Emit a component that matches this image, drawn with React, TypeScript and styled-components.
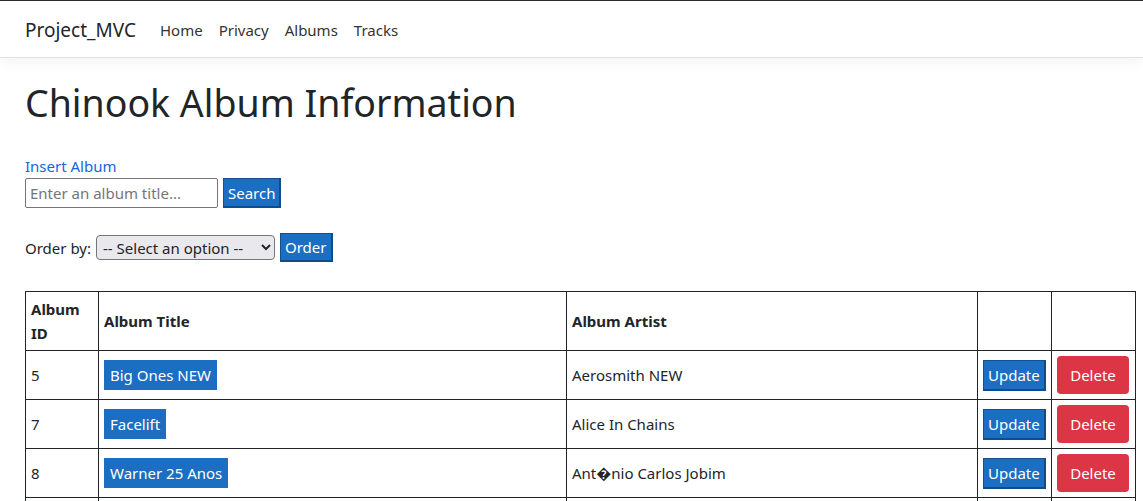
import styled, { createGlobalStyle } from 'styled-components'

const GlobalStyle = createGlobalStyle`
  body {
    margin: 0;
    font-family: 'Noto Sans', 'Open Sans', sans-serif;
    font-size: 15px;
    line-height: 24px;
    color: #212529;
    background: #fff;
    border-top: 1px solid #2b2b2b;
  }
`

const NavBar = styled.nav`
  height: 56px;
  display: flex;
  align-items: center;
  padding: 0 25px;
  background: #fff;
  border-bottom: 1px solid #dee2e6;
  box-shadow: 0 4px 12px rgba(0, 0, 0, 0.05);
`

const Brand = styled.a`
  font-size: 19px;
  line-height: 30px;
  padding-top: 2px;
  color: #212529;
  text-decoration: none;
  margin-right: 16px;
`

const NavLink = styled.a`
  padding: 2px 8px 0;
  color: #333;
  text-decoration: none;
`

const Main = styled.main`
  padding: 22px 8px 0 25px;
`

const Title = styled.h1`
  font-size: 37.5px;
  font-weight: 400;
  line-height: 45px;
  margin: 0 0 29px;
`

const TextLink = styled.a`
  display: block;
  color: #1466da;
  text-decoration: none;
`

const Row = styled.form<{ $mb: number }>`
  display: flex;
  align-items: center;
  gap: 5px;
  margin-bottom: ${({ $mb }) => `${$mb}px`};
`

const TextInput = styled.input`
  width: 193px;
  height: 30px;
  box-sizing: border-box;
  border: 1px solid #767676;
  border-radius: 2px;
  padding: 0 4px;
  font: inherit;
  &::placeholder {
    color: #757575;
  }
`

const Select = styled.select`
  height: 25px;
  width: 179px;
  border: 1px solid #767676;
  border-radius: 4px;
  background: #e9e9ed;
  font: inherit;
  color: #212529;
  padding: 0 2px;
`

const FormButton = styled.button<{ $h?: number }>`
  height: ${({ $h }) => ($h ? `${$h}px` : '30px')};
  padding: 0 4px;
  font: inherit;
  color: #fff;
  background: #1b6ec2;
  border: 1px solid #164f8a;
  border-right: 2px solid #0f4c8a;
  border-bottom: 2px solid #0f4c8a;
`

const Table = styled.table`
  width: 1111px;
  table-layout: fixed;
  border-collapse: collapse;

  th,
  td {
    border: 1px solid #212529;
    padding: 5px;
    vertical-align: middle;
    text-align: left;
  }
`

const TitleTag = styled.span`
  display: inline-block;
  background: #1b6ec2;
  color: #fff;
  padding: 3px 6px;
`

const DangerButton = styled.button`
  width: 72px;
  height: 38px;
  font: inherit;
  color: #fff;
  background: #dc3545;
  border: none;
  border-radius: 4px;
`

const albums = [
  { id: 5, title: 'Big Ones NEW', artist: 'Aerosmith NEW' },
  { id: 7, title: 'Facelift', artist: 'Alice In Chains' },
  { id: 8, title: 'Warner 25 Anos', artist: 'Ant\uFFFDnio Carlos Jobim' },
  { id: 9, title: 'Plays Metallica By Four Cellos', artist: 'Apocalyptica' },
]

export default function App() {
  return (
    <>
      <GlobalStyle />
      <NavBar>
        <Brand href="#">Project_MVC</Brand>
        <NavLink href="#">Home</NavLink>
        <NavLink href="#">Privacy</NavLink>
        <NavLink href="#">Albums</NavLink>
        <NavLink href="#">Tracks</NavLink>
      </NavBar>
      <Main>
        <Title>Chinook Album Information</Title>
        <TextLink href="#">Insert Album</TextLink>
        <Row $mb={25}>
          <TextInput placeholder="Enter an album title..." />
          <FormButton type="button">Search</FormButton>
        </Row>
        <Row $mb={29}>
          <span>Order by:</span>
          <Select defaultValue="">
            <option value="">-- Select an option --</option>
          </Select>
          <FormButton type="button" $h={29}>Order</FormButton>
        </Row>
        <Table>
          <colgroup>
            <col style={{ width: 73 }} />
            <col style={{ width: 468 }} />
            <col style={{ width: 411 }} />
            <col style={{ width: 74 }} />
            <col style={{ width: 84 }} />
          </colgroup>
          <thead>
            <tr>
              <th>Album ID</th>
              <th>Album Title</th>
              <th>Album Artist</th>
              <th></th>
              <th></th>
            </tr>
          </thead>
          <tbody>
            {albums.map((a) => (
              <tr key={a.id}>
                <td>{a.id}</td>
                <td>
                  <TitleTag>{a.title}</TitleTag>
                </td>
                <td>{a.artist}</td>
                <td>
                  <FormButton type="button" $h={31}>Update</FormButton>
                </td>
                <td>
                  <DangerButton type="button">Delete</DangerButton>
                </td>
              </tr>
            ))}
          </tbody>
        </Table>
      </Main>
    </>
  )
}
